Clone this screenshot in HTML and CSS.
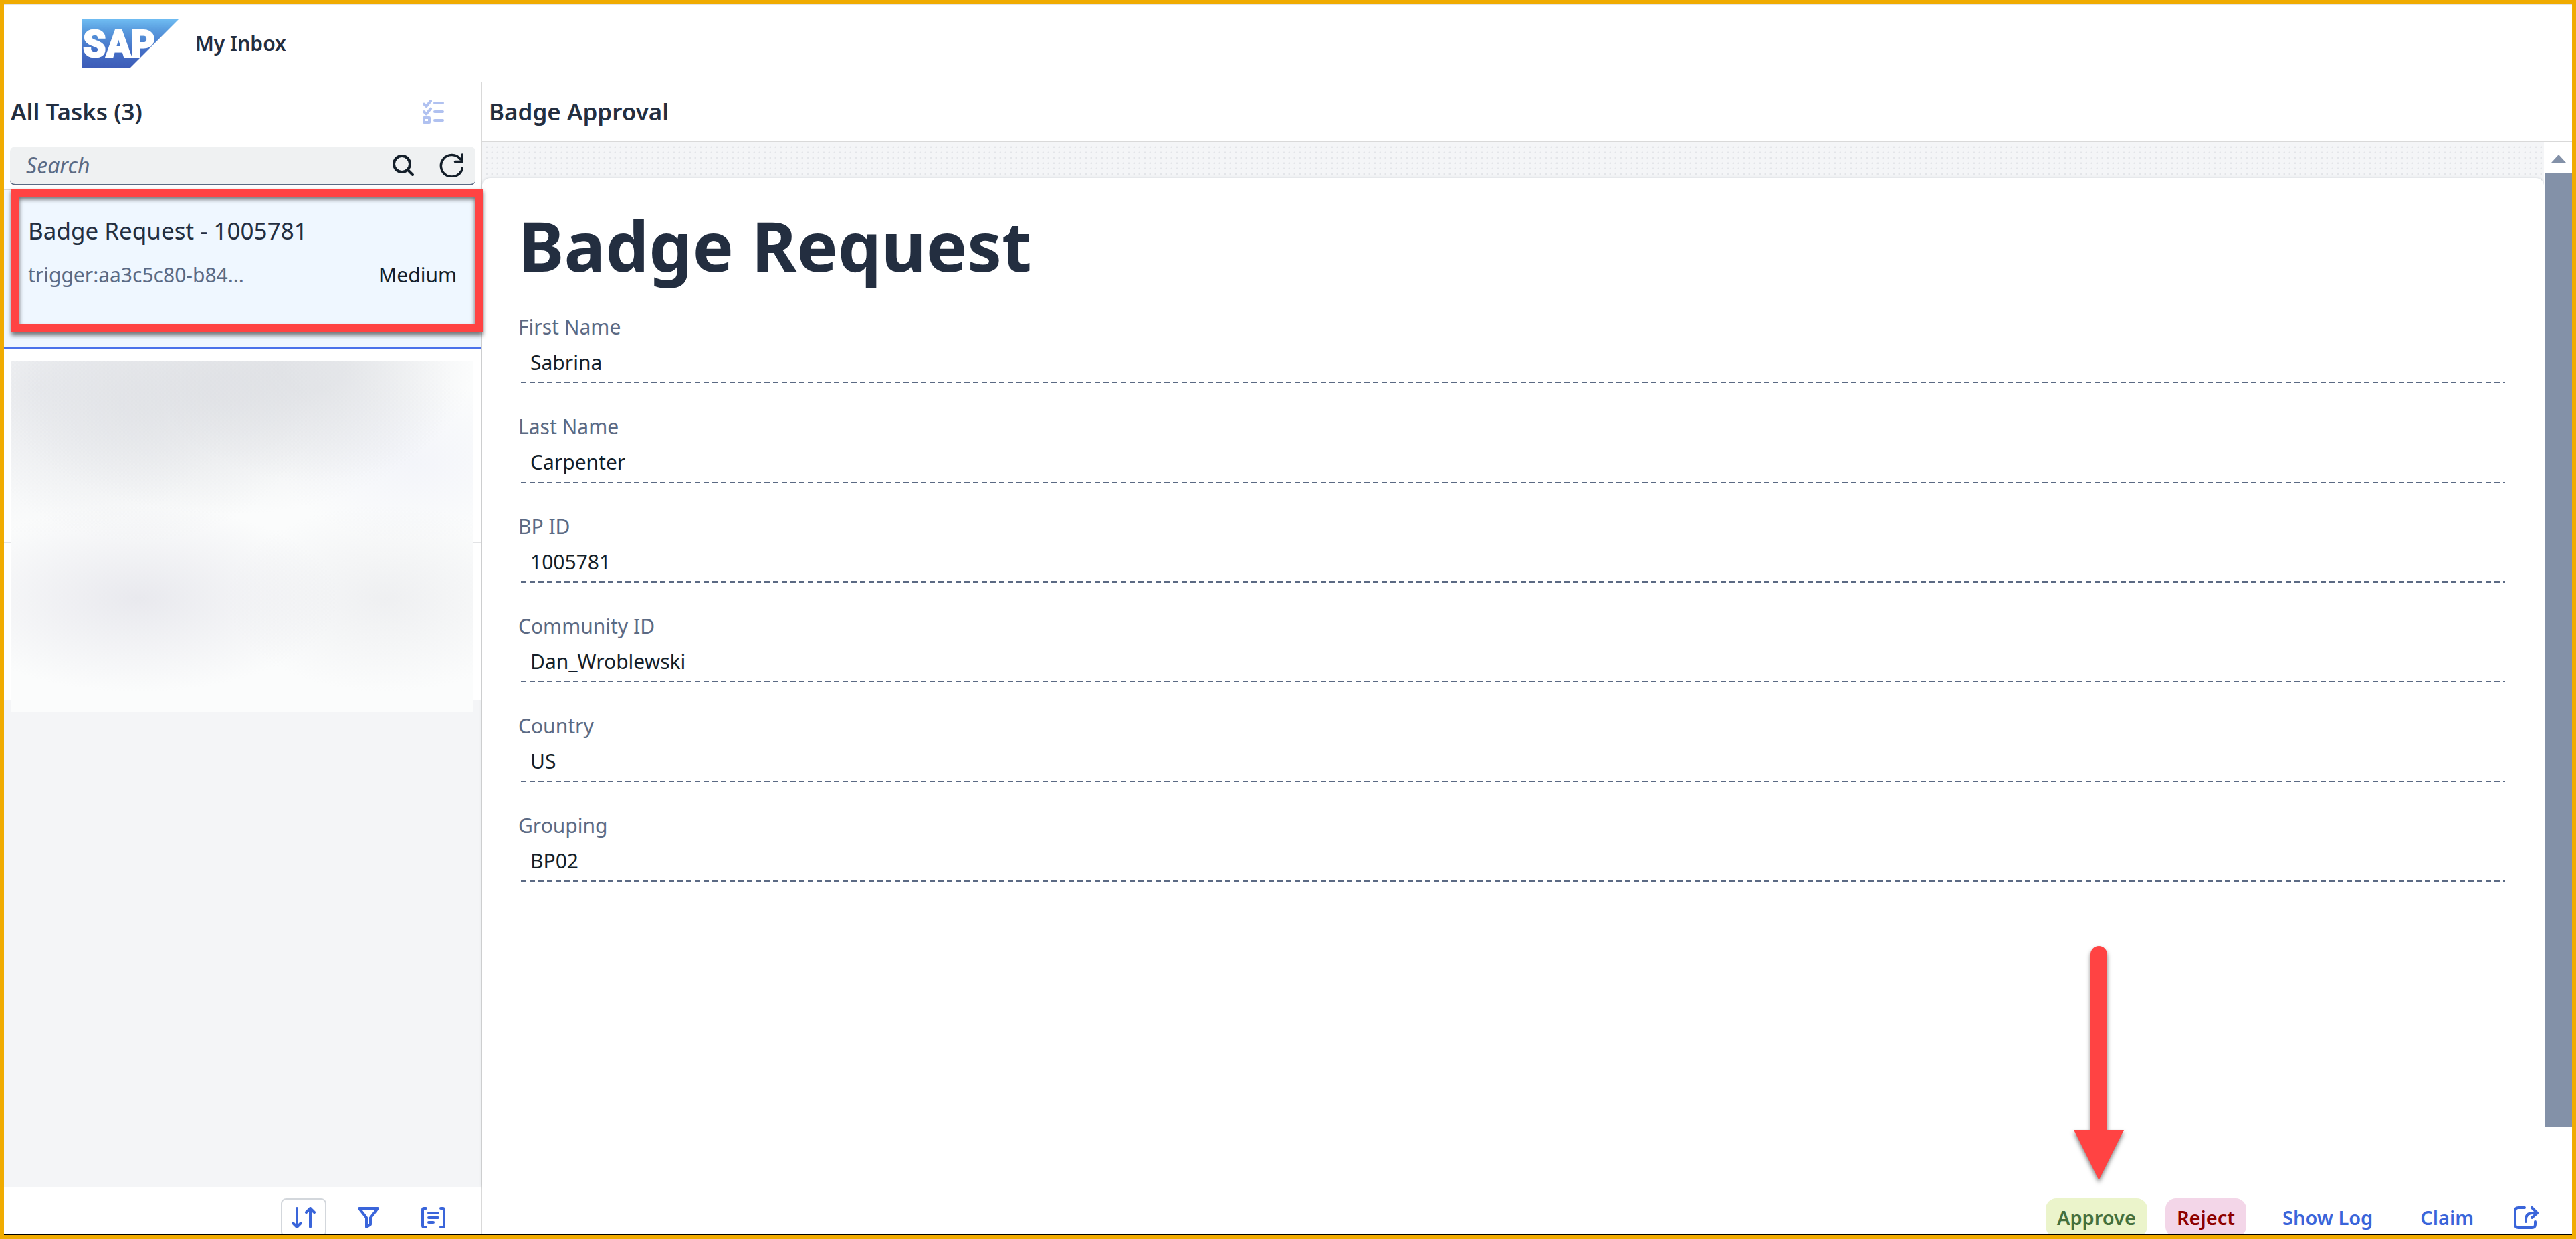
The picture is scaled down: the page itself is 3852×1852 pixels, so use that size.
FILE: index.html
```html
<!DOCTYPE html>
<html lang="en">
<head>
<meta charset="utf-8">
<title>My Inbox</title>
<link rel="stylesheet" href="styles.css">
</head>
<body>
<div class="app">
  <header class="shell">
    <svg class="logo" viewBox="0 0 145 72" role="img" aria-label="SAP">
      <defs>
        <linearGradient id="logo-fill" x1="0" y1="0" x2="0" y2="1">
          <stop offset="0" stop-color="#6fbcf2"/>
          <stop offset="0.2" stop-color="#5b9fe0"/>
          <stop offset="0.65" stop-color="#446fc6"/>
          <stop offset="1" stop-color="#3d5cb8"/>
        </linearGradient>
      </defs>
      <path d="M0 0H145L73 72H0Z" fill="url(#logo-fill)"/>
      <text class="logo-text" x="2" y="56">SAP</text>
    </svg>
    <h1 class="shell-title">My Inbox</h1>
  </header>

  <div class="panes">
    <aside class="master">
      <div class="pane-head">
        <h2 class="pane-title">All Tasks (3)</h2>
        <button class="icon-btn muted" type="button" aria-label="Select multiple tasks">
          <svg width="32" height="36" viewBox="0 0 32 36" fill="none" stroke="currentColor" stroke-width="4" stroke-linecap="round" stroke-linejoin="round">
            <path d="M2 6.500L5.500 10L12 2M2 18L5.500 21.500L12 13.500M18 5H30M18 18H30M18 31H30"/>
            <path d="M2 27H10V34H2Z"/>
          </svg>
        </button>
      </div>
      <div class="search-row">
        <form class="search" role="search">
          <input class="search-input" type="text" placeholder="Search" aria-label="Search">
          <button class="search-btn" type="button" aria-label="Search tasks">
            <svg width="32" height="32" viewBox="0 0 32 32" fill="none" stroke="currentColor" stroke-width="4" stroke-linecap="round">
              <circle cx="14" cy="14" r="12"/><path d="M22.500 22.500L30 30"/>
            </svg>
          </button>
          <button class="search-btn" type="button" aria-label="Refresh">
            <svg width="36" height="36" viewBox="0 0 36 36" fill="none" stroke="currentColor" stroke-width="3.500" stroke-linecap="round" stroke-linejoin="round">
              <path d="M34.500 22A16.200 16.200 0 1 1 31.500 9"/><path d="M34.200 2V12.500H23.500"/>
            </svg>
          </button>
        </form>
      </div>
      <ul class="tasks">
        <li class="task selected">
          <h3 class="task-title">Badge Request - 1005781</h3>
          <div class="task-meta">
            <span class="task-id">trigger:aa3c5c80-b84...</span>
            <span>Medium</span>
          </div>
          <div class="marker"></div>
        </li>
        <li class="task second"><div class="redacted"></div></li>
        <li class="task third"></li>
      </ul>
      <footer class="bar master-bar">
        <button class="icon-btn outlined" type="button" aria-label="Sort">
          <svg width="36" height="32" viewBox="0 0 36 32" fill="none" stroke="currentColor" stroke-width="4" stroke-linecap="round" stroke-linejoin="round">
            <path d="M8 2V29M2 24L8 30L14 24M28 30V3M22 8L28 2L34 8"/>
          </svg>
        </button>
        <button class="icon-btn" type="button" aria-label="Filter">
          <svg width="32" height="32" viewBox="0 0 32 32" fill="none" stroke="currentColor" stroke-width="4" stroke-linejoin="round">
            <path d="M2 2H30L19 16V26L13 30V16Z"/>
          </svg>
        </button>
        <button class="icon-btn" type="button" aria-label="Group">
          <svg width="36" height="32" viewBox="0 0 36 32" fill="none" stroke="currentColor" stroke-width="4" stroke-linecap="round" stroke-linejoin="round">
            <path d="M7 2H4Q2 2 2 4V28Q2 30 4 30H7M29 2H32Q34 2 34 4V28Q34 30 32 30H29M11 9H25M11 16H25M11 23H18"/>
          </svg>
        </button>
      </footer>
    </aside>

    <main class="detail">
      <div class="pane-head detail-head">
        <h2 class="pane-title">Badge Approval</h2>
      </div>
      <div class="viewport">
        <div class="canvas">
          <form class="card">
            <h1 class="form-title">Badge Request</h1>
            <div class="fields">
              <div class="field"><label for="first">First Name</label><input id="first" value="Sabrina" readonly></div>
              <div class="field"><label for="last">Last Name</label><input id="last" value="Carpenter" readonly></div>
              <div class="field"><label for="bp">BP ID</label><input id="bp" value="1005781" readonly></div>
              <div class="field"><label for="community">Community ID</label><input id="community" value="Dan_Wroblewski" readonly></div>
              <div class="field"><label for="country">Country</label><input id="country" value="US" readonly></div>
              <div class="field"><label for="grouping">Grouping</label><input id="grouping" value="BP02" readonly></div>
            </div>
          </form>
        </div>
        <div class="scrollbar">
          <div class="scroll-up"><svg width="22" height="12" viewBox="0 0 22 12"><path d="M11 0L22 12H0Z" fill="#8391a8"/></svg></div>
          <div class="scroll-thumb"></div>
        </div>
      </div>
      <footer class="bar detail-bar">
        <button class="btn approve" type="button">Approve</button>
        <button class="btn reject" type="button">Reject</button>
        <button class="btn plain" type="button">Show Log</button>
        <button class="btn plain" type="button">Claim</button>
        <button class="icon-btn" type="button" aria-label="Share">
          <svg width="37" height="34" viewBox="0 0 37 34" fill="none" stroke="currentColor" stroke-width="4" stroke-linecap="round" stroke-linejoin="round">
            <path d="M16 2H7Q2 2 2 7V27Q2 32 7 32H27Q32 32 32 27V23M18 23V20Q18 10 28 10H34M27 2L35 10L27 17"/>
          </svg>
        </button>
      </footer>
    </main>
  </div>

  <svg class="arrow" width="75" height="350" viewBox="0 0 75 350" aria-hidden="true">
    <path d="M25 12.500A12.500 12.500 0 0 1 50 12.500V275H75L37.500 350L0 275H25Z" fill="#ff4343"/>
  </svg>
</div>
</body>
</html>
```
FILE: styles.css
```css
* {
  box-sizing: border-box;
}

body {
  margin: 0;
  font-family: "Noto Sans", "Open Sans", sans-serif;
  font-size: 30px;
  line-height: 40px;
  color: #131e29;
}

h1,
h2,
h3,
ul {
  margin: 0;
  padding: 0;
}

button,
input {
  font: inherit;
  border: 0;
  outline: 0;
}

button {
  flex: none;
  display: flex;
  align-items: center;
  justify-content: center;
  padding: 0;
  background: none;
}

.app {
  position: relative;
  display: flex;
  flex-direction: column;
  height: 100vh;
  overflow: hidden;
  border: 6px solid #f0ab00;
  background: #fff;
}

/* Shell header */
.shell {
  flex: none;
  display: flex;
  align-items: center;
  gap: 25px;
  height: 117px;
  padding: 0 0 0 116px;
  border-top: 1px solid #e4e4e4;
}

.logo {
  width: 145px;
  height: 72px;
  overflow: visible;
}

.logo-text {
  font-family: Roboto, "Liberation Sans", sans-serif;
  font-size: 55px;
  font-weight: 900;
  fill: #fff;
  stroke: #fff;
  stroke-width: 2px;
}

.shell-title {
  font-size: 30px;
  font-weight: 600;
  color: #232e40;
}

/* Two panes */
.panes {
  flex: 1;
  min-height: 0;
  display: grid;
  grid-template-columns: 715px minmax(0, 1fr);
  border-bottom: 2px solid #000;
}

.master,
.detail {
  display: flex;
  flex-direction: column;
  min-height: 0;
}

.master {
  border-right: 2px solid #d9d9d9;
  background: #f4f5f7;
}

.pane-head {
  flex: none;
  display: flex;
  align-items: center;
  justify-content: space-between;
  height: 88px;
  padding: 0 37px 0 10px;
  background: #fff;
}

.pane-title {
  font-size: 35px;
  font-weight: 600;
  color: #232e40;
}

.icon-btn {
  width: 68px;
  height: 58px;
  color: #3a65da;
}

.icon-btn.muted {
  color: #b0c1f0;
}

.icon-btn.outlined {
  border: 2px solid #d3d7dc;
  border-radius: 8px;
}

.search-row {
  flex: none;
  padding: 8px 8px 5px 9px;
  border-bottom: 2px solid #d9d9d9;
  background: #fff;
}

.search {
  display: flex;
  height: 58px;
  border-bottom: 2px solid #5b6a84;
  border-radius: 8px;
  background: #eff1f2;
}

.search-input {
  flex: 1;
  min-width: 0;
  padding: 2px 24px 0;
  background: none;
}

.search-input::placeholder {
  font-size: 32px;
  font-style: italic;
  color: #5b6a84;
  opacity: 1;
}

.search-btn {
  width: 72px;
  color: #131e29;
}

/* Task list */
.tasks {
  flex: 1;
  min-height: 0;
  list-style: none;
}

.task {
  position: relative;
  border-bottom: 1px solid #e2e3e5;
  background: #fff;
}

.task.selected {
  height: 237px;
  padding: 38px 36px 0;
  border-bottom: 2px solid #4a72ea;
  background: #eff7ff;
}

.task.second {
  height: 290px;
}

.task.third {
  height: 236px;
}

.task-title {
  font-size: 35px;
  font-weight: 400;
  line-height: 46px;
  color: #232e40;
}

.task-meta {
  display: flex;
  justify-content: space-between;
  padding-top: 23px;
  line-height: 40px;
}

.task-id {
  color: #5b6a84;
}

.marker {
  position: absolute;
  z-index: 2;
  inset: -2px -3px 22px 11px;
  border: 12px solid #ff4343;
  filter: drop-shadow(0 4px 3px rgba(0, 0, 0, 0.55));
}

.redacted {
  position: absolute;
  z-index: 1;
  top: 19px;
  left: 11px;
  right: 12px;
  height: 525px;
  background:
    radial-gradient(ellipse 340px 190px at 320px 40px, rgba(215, 217, 222, 0.5) 10%, transparent 100%),
    radial-gradient(ellipse 260px 210px at 190px 60px, rgba(215, 217, 222, 0.4) 10%, transparent 100%),
    radial-gradient(ellipse 240px 170px at 450px 10px, rgba(215, 217, 222, 0.5) 20%, transparent 100%),
    radial-gradient(ellipse 300px 220px at 40px 40px, rgba(220, 222, 228, 0.5) 0%, transparent 100%),
    radial-gradient(ellipse 300px 140px at 190px 355px, rgba(225, 225, 232, 0.7) 0%, transparent 100%),
    radial-gradient(ellipse 240px 140px at 560px 355px, rgba(230, 231, 234, 0.6) 0%, transparent 100%),
    radial-gradient(ellipse 200px 120px at 600px 150px, rgba(238, 240, 248, 0.6) 0%, transparent 100%),
    #fbfcfc;
}

/* Bottom toolbars */
.bar {
  flex: none;
  display: flex;
  justify-content: flex-end;
  align-items: flex-start;
  height: 70px;
  padding-top: 16px;
  overflow: hidden;
  border-top: 1px solid #d9d9d9;
  background: #fff;
}

.master-bar {
  gap: 29px;
  padding-right: 37px;
}

.detail-bar {
  gap: 27px;
  padding-right: 35px;
}

.btn {
  height: 58px;
  padding: 0 17px;
  border-radius: 16px;
  font-size: 29px;
  font-weight: 600;
}

.approve {
  color: #45703d;
  background: #ebf4cb;
}

.reject {
  color: #8e0000;
  background: #f3d6e8;
}

.plain {
  margin-left: 10px;
  color: #3a65da;
}

/* Detail pane */
.detail-head {
  height: 90px;
  border-bottom: 2px solid #d9d9d9;
}

.viewport {
  flex: 1;
  min-height: 0;
  display: flex;
}

.canvas {
  flex: 1;
  min-width: 0;
  padding-top: 53px;
  background: radial-gradient(circle at 7px 7px, #e3e5e9 1px, transparent 2px) 0 0 / 8px 8px #f4f5f7;
}

.card {
  height: 100%;
  padding: 40px 58px 0 54px;
  border-radius: 12px 12px 0 0;
  background: #fff;
  box-shadow: 0 0 4px rgba(34, 53, 72, 0.16);
}

.form-title {
  font-size: 103px;
  font-weight: 700;
  line-height: 120px;
  color: #232e40;
}

.fields {
  display: grid;
  gap: 44px;
  padding-top: 43px;
}

.field {
  display: flex;
  flex-direction: column;
}

.field label {
  color: #5b6a84;
}

.field input {
  height: 64px;
  margin-left: 4px;
  padding: 3px 14px 2px;
  color: #131e29;
  background: repeating-linear-gradient(90deg, #5b6a84 0 8px, transparent 8px 13px) 0 100% / 100% 2px no-repeat;
}

.field + .field {
  padding-top: 1px;
}

.scrollbar {
  display: flex;
  flex-direction: column;
  width: 42px;
  padding: 0 0 89px 2px;
  background: #fff;
}

.scroll-up {
  display: flex;
  align-items: center;
  justify-content: center;
  height: 45px;
  padding-top: 2px;
}

.scroll-thumb {
  flex: 1;
  background: #8391a8;
}

/* Callout arrow over the page */
.arrow {
  position: absolute;
  right: 670px;
  bottom: 82px;
  overflow: visible;
  filter: drop-shadow(0 4px 3px rgba(0, 0, 0, 0.5));
}
```
